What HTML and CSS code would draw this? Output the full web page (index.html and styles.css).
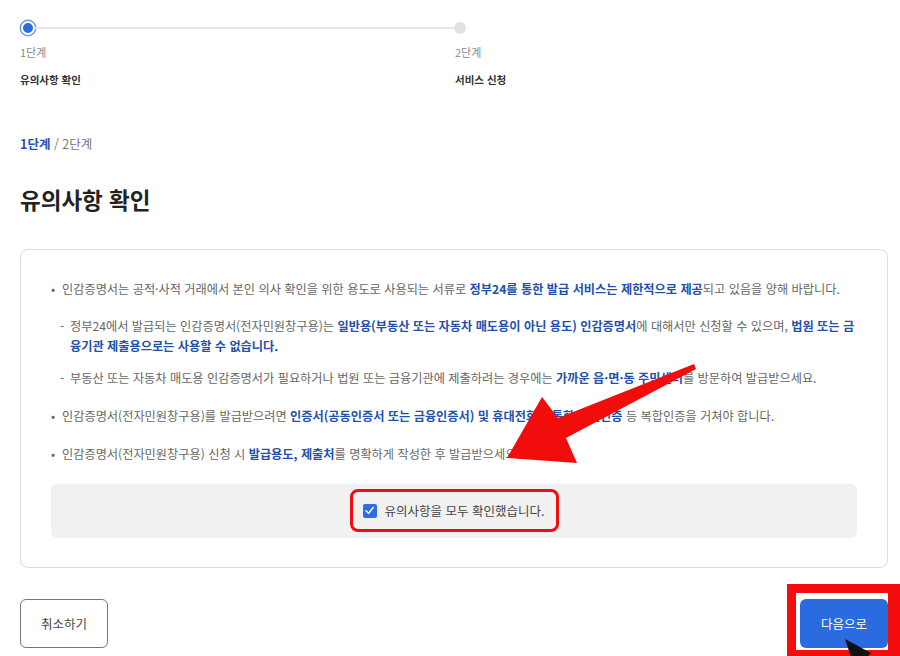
FILE: index.html
```html
<!DOCTYPE html>
<html lang="ko">
<head>
<meta charset="utf-8">
<title>인감증명서 발급 - 유의사항 확인</title>
<link rel="stylesheet" href="styles.css">
</head>
<body>
<div class="page">
  <div class="steps">
    <div class="step step-first">
      <div class="track">
        <span class="dot dot-active"></span>
        <span class="line"></span>
      </div>
      <div class="step-num">1단계</div>
      <div class="step-name">유의사항 확인</div>
    </div>
    <div class="step">
      <div class="track">
        <span class="dot"></span>
      </div>
      <div class="step-num">2단계</div>
      <div class="step-name">서비스 신청</div>
    </div>
  </div>

  <div class="crumb"><b>1단계</b> / 2단계</div>

  <h1 class="title">유의사항 확인</h1>

  <div class="notice">
    <ul class="list">
      <li class="item">인감증명서는 공적·사적 거래에서 본인 의사 확인을 위한 용도로 사용되는 서류로 <b>정부24를 통한 발급 서비스는 제한적으로 제공</b>되고 있음을 양해 바랍니다.
        <ul class="sub">
          <li class="sub-item">정부24에서 발급되는 인감증명서(전자민원창구용)는 <b>일반용(부동산 또는 자동차 매도용이 아닌 용도) 인감증명서</b>에 대해서만 신청할 수 있으며, <b>법원 또는 금융기관 제출용으로는 사용할 수 없습니다.</b></li>
          <li class="sub-item">부동산 또는 자동차 매도용 인감증명서가 필요하거나 법원 또는 금융기관에 제출하려는 경우에는 <b>가까운 읍·면·동 주민센터</b>를 방문하여 발급받으세요.</li>
        </ul>
      </li>
      <li class="item">인감증명서(전자민원창구용)를 발급받으려면 <b>인증서(공동인증서 또는 금융인증서) 및 휴대전화를 통한 본인인증</b> 등 복합인증을 거쳐야 합니다.</li>
      <li class="item">인감증명서(전자민원창구용) 신청 시 <b>발급용도, 제출처</b>를 명확하게 작성한 후 발급받으세요.</li>
    </ul>

    <div class="agree">
      <label class="agree-label">
        <span class="check">
          <svg viewBox="0 0 14 14" width="13" height="13"><path d="M3.2 7.2 L6 10 L11 3.8" fill="none" stroke="#fff" stroke-width="1.6" stroke-linecap="round" stroke-linejoin="round"/></svg>
        </span>
        <span>유의사항을 모두 확인했습니다.</span>
      </label>
    </div>
  </div>

  <div class="actions">
    <button class="btn btn-cancel">취소하기</button>
    <span class="highlight-frame">
      <button class="btn btn-next">다음으로</button>
    </span>
  </div>

  <svg class="annot-arrow" width="900" height="656" viewBox="0 0 900 656">
    <polygon points="694,364 558,418 542,397 507,458 577,463 566,438 696,369" fill="#f20d0d"/>
  </svg>
  <svg class="annot-cursor" width="30" height="20" viewBox="0 0 30 20">
    <polygon points="2,2 28,16 24,20 8,20" fill="#111"/>
  </svg>
</div>
</body>
</html>
```

FILE: styles.css
```css
* { box-sizing: border-box; }
html, body { margin: 0; padding: 0; background: #fff; }
body {
  font-family: "Noto Sans CJK KR", "Noto Sans", sans-serif;
  color: #333;
  overflow: hidden;
}
.page {
  position: relative;
  width: 900px;
  height: 656px;
  padding: 21px 12px 0 20px;
}

/* steps */
.steps { display: flex; }
.step { display: flex; flex-direction: column; }
.step-first { width: 435px; }
.track { display: flex; align-items: center; height: 14px; }
.dot {
  width: 12px; height: 12px; border-radius: 50%;
  background: #e2e2e2; flex: none;
}
.step-first .dot { margin-left: 1px; }
.dot-active {
  width: 14px; height: 14px;
  background: #2c6be0;
  border: 2px solid #fff;
  box-shadow: 0 0 0 1.5px #6b9bee;
}
.line { flex: 1; height: 2px; background: #e6e6e6; }
.step:not(.step-first) .dot { margin-left: -1px; }
.step-num {
  margin-top: 9px;
  font-size: 11px;
  color: #8a8a8a;
  line-height: 16px;
}
.step-name {
  margin-top: 12px;
  font-size: 10.5px;
  font-weight: 700;
  color: #333;
  line-height: 16px;
}

.crumb {
  margin-top: 47px;
  font-size: 12.5px;
  color: #777;
  line-height: 18px;
}
.crumb b { color: #2353b8; font-weight: 700; }

.title {
  margin: 31px 0 0;
  font-size: 22.5px;
  font-weight: 700;
  color: #222;
  line-height: 30px;
}

/* notice box */
.notice {
  margin-top: 35px;
  border: 1px solid #dcdcdc;
  border-radius: 8px;
  padding: 29px 27px 29px 30px;
}
.list, .sub { list-style: none; margin: 0; padding: 0; }
.list { font-size: 12.2px; line-height: 20px; color: #666; }
.item { position: relative; padding-left: 11px; margin-top: 18px; }
.item:first-child { margin-top: 0; }
.item::before {
  content: "•";
  position: absolute;
  left: 0; top: 0;
  color: #666;
}
.list b { color: #2450ad; font-weight: 700; }
.sub { margin-top: 17px; margin-left: -2px; }
.sub-item { position: relative; padding-left: 10px; margin-top: 12px; }
.sub-item:first-child { margin-top: 0; }
.sub-item::before {
  content: "-";
  position: absolute;
  left: 0; top: 0;
}
.sub-item:last-child { margin-bottom: 14px; }

.agree {
  margin-top: 20px;
  margin-right: 3px;
  background: #f1f1f1;
  border-radius: 6px;
  padding: 5px 0 6px;
  display: flex;
  justify-content: center;
}
.agree-label {
  display: inline-flex;
  align-items: center;
  gap: 8px;
  height: 43px;
  padding: 0 11px 0 10px;
  border: 3px solid #f00d0d;
  border-radius: 8px;
  font-size: 12.5px;
  color: #444;
}
.check {
  width: 14px; height: 14px;
  border-radius: 2px;
  background: #2f6ede;
  display: inline-flex;
  align-items: center;
  justify-content: center;
}

/* actions */
.actions {
  margin-top: 16px;
  display: flex;
  justify-content: space-between;
  align-items: flex-start;
}
.btn {
  font-family: inherit;
  font-size: 12.5px;
  height: 49px;
  border-radius: 6px;
  cursor: pointer;
}
.btn-cancel {
  margin-top: 15px;
  width: 88px;
  background: #fff;
  color: #444;
  border: 1.5px solid #777;
}
.highlight-frame {
  display: inline-flex;
  border: 9px solid #f50c0c;
  border-right-width: 12px;
  padding: 6px 0 2px 4px;
  background: #fff;
  margin-right: -12px;
}
.btn-next {
  width: 88px;
  background: #2b6be0;
  color: #fff;
  border: none;
}

/* annotations */
.annot-arrow {
  position: absolute;
  left: 0; top: 0;
  pointer-events: none;
}
.annot-cursor {
  position: absolute;
  left: 843px; top: 637px;
  pointer-events: none;
}
```
